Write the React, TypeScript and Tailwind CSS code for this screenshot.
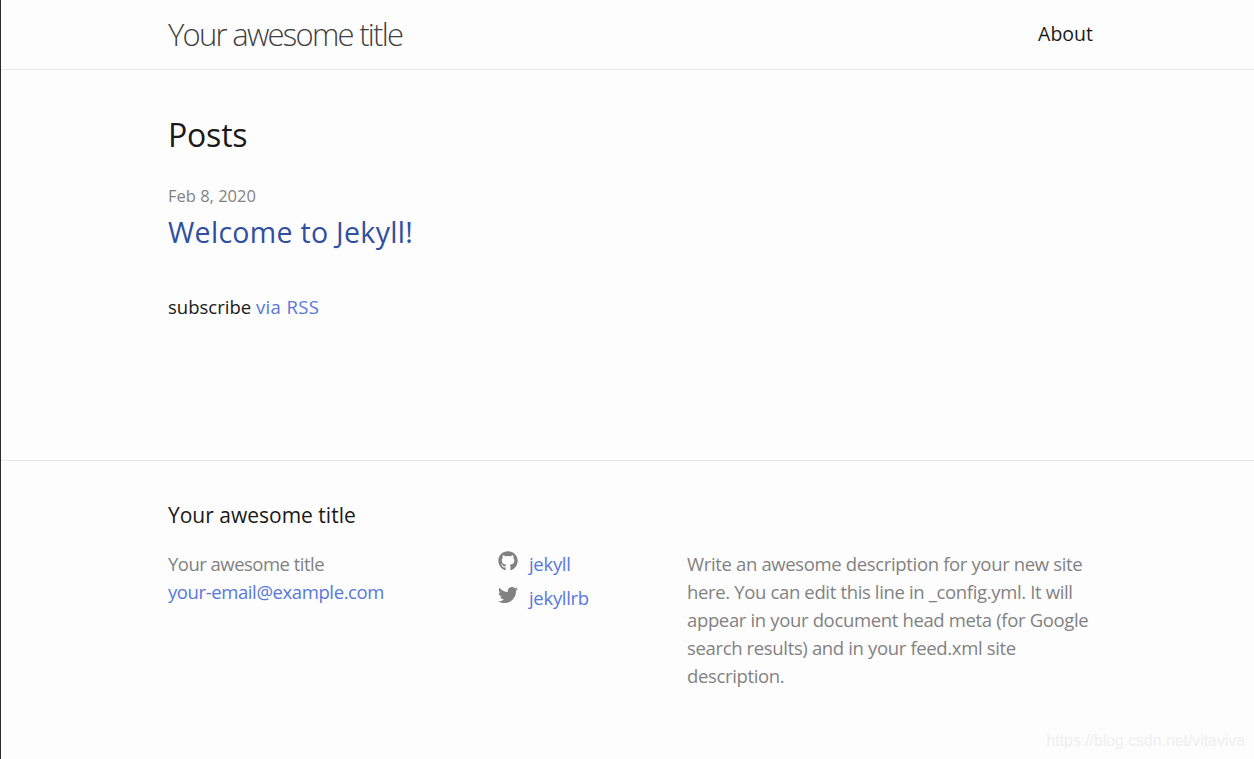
import { FaGithub, FaTwitter } from 'react-icons/fa'

const font = "font-['Open_Sans','Noto_Sans',sans-serif]"

export default function App() {
  return (
    <div className={`relative h-[759px] overflow-hidden border-l border-[#2a2a2a] bg-[#fdfdfd] text-[#1a1a1a] ${font}`}>
      {/* Header */}
      <header className="h-[70px] border-b border-[#e8e8e8]">
        <div className="mr-[161px] ml-[167px] flex items-center justify-between">
          <a className="text-[31px] leading-[69px] font-light tracking-[-1.75px] text-[#424242]">Your awesome title</a>
          <a className="-mt-[2px] text-[19.5px] leading-[69px] tracking-[0px] text-[#1a1a1a]">About</a>
        </div>
      </header>

      {/* Posts */}
      <main className="mr-[161px] ml-[167px] h-[390px] pt-[43px]">
        <h1 className="text-[32px] leading-[43px] tracking-[-0.2px]">Posts</h1>
        <p className="mt-[28px] text-[16.5px] leading-[24px] text-[#828282]">Feb 8, 2020</p>
        <a className="mt-[6px] block text-[28.5px] leading-[36px] tracking-[0.3px] text-[#30509f]">Welcome to Jekyll!</a>
        <p className="mt-[43px] text-[18.5px] leading-[28px]">
          subscribe <a className="tracking-[0.4px] text-[#5878dc]">via RSS</a>
        </p>
      </main>

      {/* Footer */}
      <footer className="border-t border-[#e8e8e8]">
        <div className="mr-[161px] ml-[167px] pt-[39px]">
          <h2 className="text-[21px] leading-[30px]">Your awesome title</h2>
          <div className="mt-[20px] grid grid-cols-[330px_189px_1fr] text-[18.5px] leading-[28px] tracking-[-0.35px] text-[#828282]">
            <div>
              <p className="tracking-[-0.52px]">Your awesome title</p>
              <a className="tracking-[-0.4px] text-[#5878dc]">your-email@example.com</a>
            </div>
            <ul className="-mt-[6px] tracking-[-0.3px]">
              <li className="flex h-[34px] items-center gap-[11px]">
                <FaGithub className="h-[20px] w-[20px]" />
                <a className="mt-[5px] text-[#5878dc]">jekyll</a>
              </li>
              <li className="flex h-[34px] items-center gap-[11px]">
                <FaTwitter className="h-[20px] w-[20px]" />
                <a className="mt-[5px] text-[#5878dc]">jekyllrb</a>
              </li>
            </ul>
            <p>
              Write an awesome description for your new site here. You can edit this line in _config.yml. It will appear
              in your document head meta (for Google search results) and in your feed.xml site description.
            </p>
          </div>
        </div>
      </footer>

      {/* watermark */}
      <span className="absolute right-[9px] bottom-[8px] font-['Liberation_Sans',sans-serif] text-[15.8px] leading-[20px] text-[#efefef]">
        https://blog.csdn.net/vitaviva
      </span>
    </div>
  )
}
